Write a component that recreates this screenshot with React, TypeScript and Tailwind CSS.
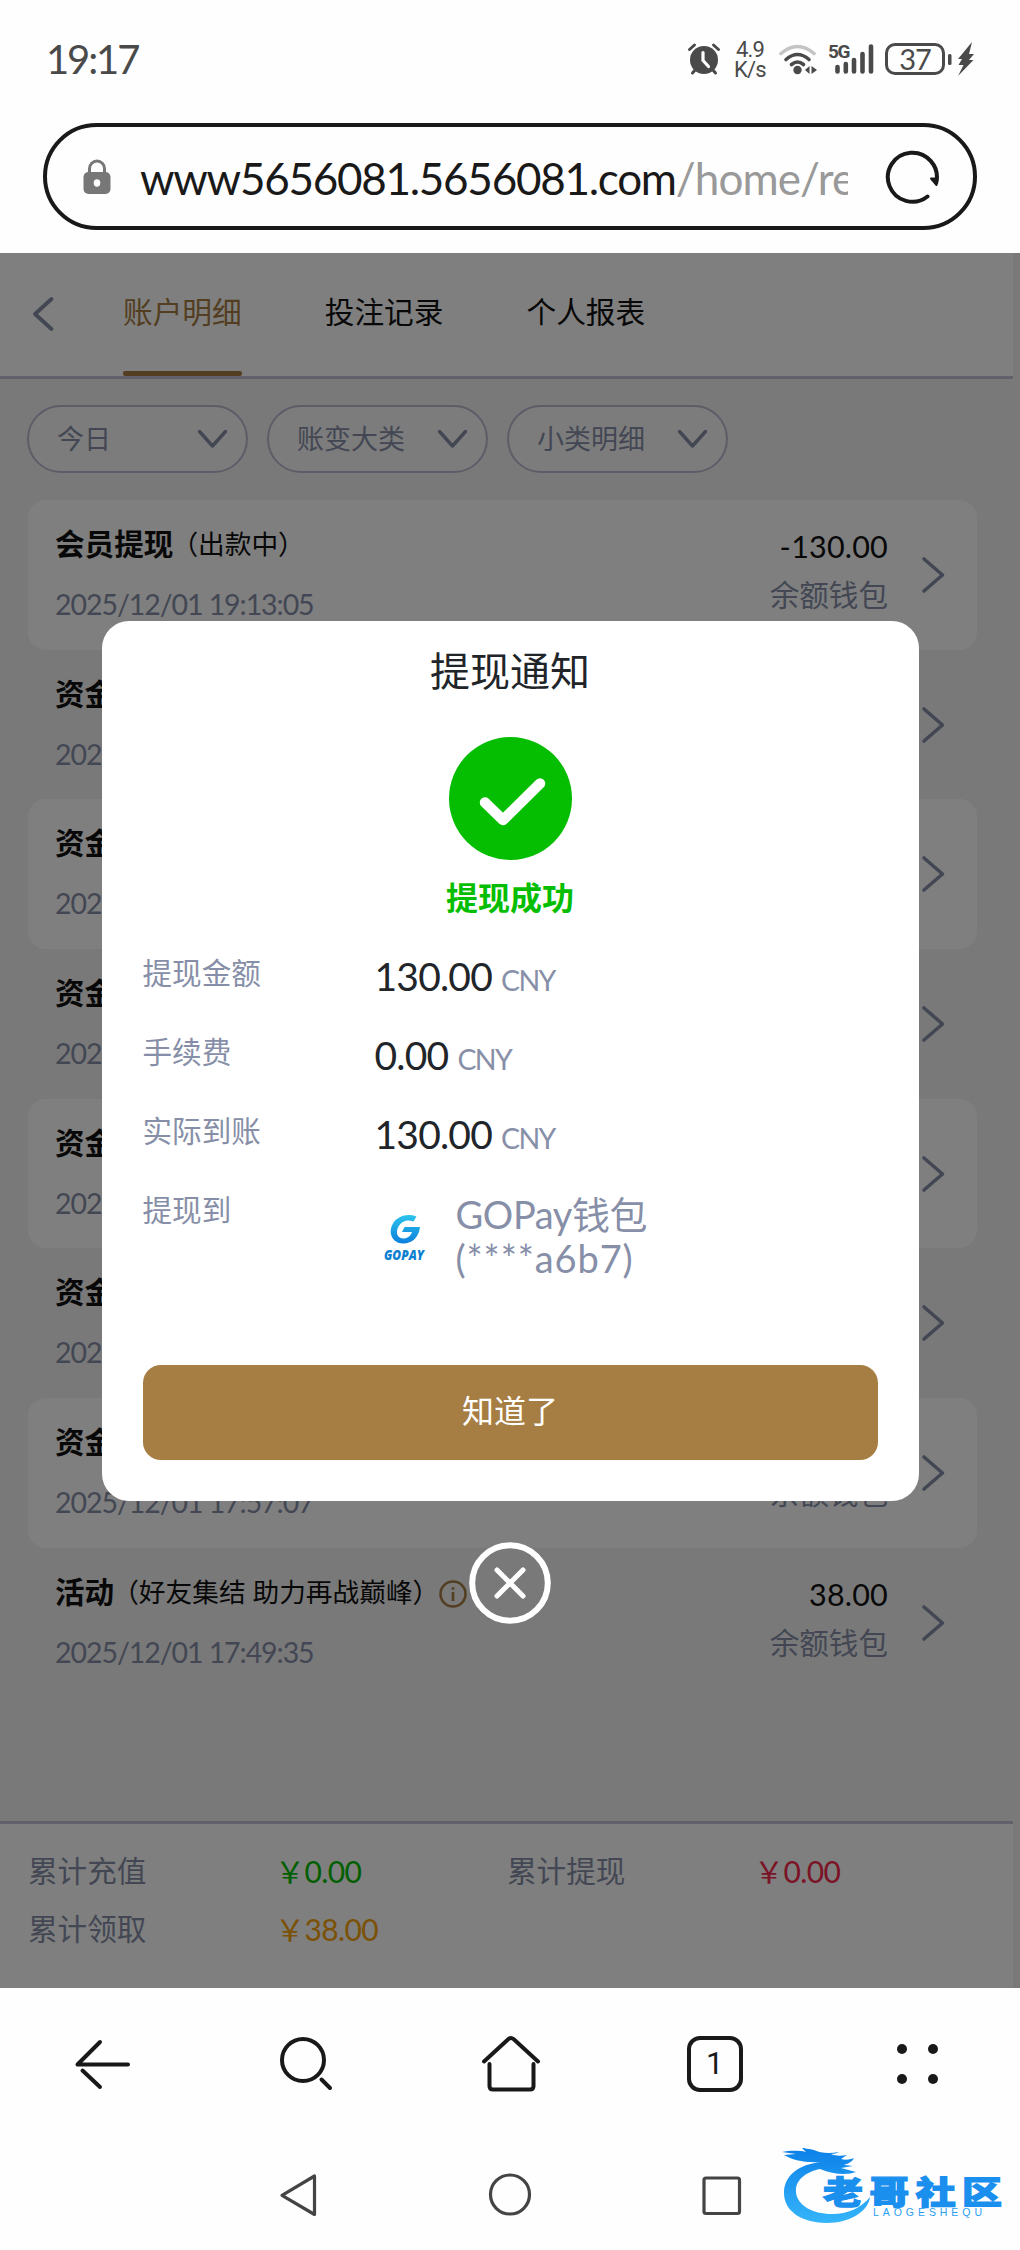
import type { ReactNode } from "react";

type RecordItem = {
  title: string;
  note?: string;
  info?: boolean;
  time: string;
  amount?: string;
};

const records: RecordItem[] = [
  { title: "会员提现", note: "（出款中）", time: "2025/12/01 19:13:05", amount: "-130.00" },
  { title: "资金", time: "2025/12/01" },
  { title: "资金", time: "2025/12/01" },
  { title: "资金", time: "2025/12/01" },
  { title: "资金", time: "2025/12/01" },
  { title: "资金", time: "2025/12/01" },
  { title: "资金", time: "2025/12/01 17:57:07" },
  { title: "活动", note: "（好友集结 助力再战巅峰）", info: true, time: "2025/12/01 17:49:35", amount: "38.00" },
];

const tabs = ["账户明细", "投注记录", "个人报表"];
const filters = ["今日", "账变大类", "小类明细"];

const StatusBar = () => (
  <div className="flex h-[123px] items-start pl-[46px] text-[#4a4a4a]">
    <span className="mt-[35px] w-[641px] text-[40px] leading-[48px] tracking-[-2.1px]">19:17</span>

    {/* alarm */}
    <svg className="mt-[42px] h-[34px] w-[34px]" viewBox="686 42 34 34" fill="none" stroke="currentColor" strokeLinecap="round">
      <circle cx="703" cy="60" r="14" fill="currentColor" stroke="none" />
      <path d="M688.500 49.500l5-4.500M717.500 49.500l-5-4.500M691.500 73l3-3.500M714.500 73l-3-3.500" strokeWidth="3" />
      <path d="M702 52.500v8l5.500 6" stroke="#fff" strokeWidth="3.200" />
    </svg>

    <div className="mt-[40px] ml-[12px] flex w-[34px] flex-col items-center font-[Roboto] text-[22px] leading-[20px] tracking-[-0.800px]">
      <span>4.9</span>
      <span>K/s</span>
    </div>

    {/* wifi */}
    <svg className="mt-[42px] ml-[11px] h-[34px] w-[40px]" viewBox="777 42 40 34" fill="none" stroke="currentColor" strokeLinecap="round" strokeWidth="3.600">
      <path d="M780 53.500q16.500-14 33 0" stroke="#c4c4c4" />
      <path d="M785 59.500q11.500-10 23 0M790.500 64.500q6-5 12 0" />
      <circle cx="796.500" cy="70" r="4.200" fill="currentColor" stroke="none" />
      <path d="M808.500 66v8l-4.500-4zM810.500 66v8l5.500-4z" fill="currentColor" stroke="none" />
    </svg>

    {/* signal */}
    <div className="relative ml-[10px] h-[76px] w-[46px]">
      <span className="absolute top-[41px] left-0 font-[Roboto] text-[19px] leading-[21px] font-bold tracking-[-1.500px]">5G</span>
      <svg className="absolute top-[42px] left-0 h-[34px] w-[46px]" viewBox="827 42 46 34" fill="none" stroke="currentColor" strokeLinecap="round" strokeWidth="4.600">
        <path d="M836.500 67v4.500M844.800 64v7.500M853 60v11.500M861.500 54v17.500M870 46.500v25" />
      </svg>
    </div>

    {/* battery */}
    <div className="mt-[43px] ml-[11px] flex h-[32px] w-[60px] items-center justify-center rounded-[10px] border-[3px] border-[#4a4a4a] text-[29px] leading-[30px] tracking-[-1px]">
      37
    </div>
    <svg className="mt-[41px] ml-[2px] h-[36px] w-[28px]" viewBox="946 41 28 36" fill="currentColor">
      <rect x="947" y="54" width="3.500" height="11" rx="1.500" />
      <path d="M971 42l-14 17h4l-3.500 6h5l-5.500 11 15.500-16h-4.500l5-6h-5z" />
    </svg>
  </div>
);

const AddressBar = () => (
  <div className="mx-[43px] mb-[23px] flex h-[107px] items-center rounded-full border-[4px] border-[#191919]">
    <svg className="ml-[36px] h-[36px] w-[28px]" viewBox="0 0 28 36">
      <path d="M6.500 15V9.500a7.500 7.500 0 0 1 15 0V15" fill="none" stroke="#777" strokeWidth="3" />
      <rect x="0.500" y="13" width="27" height="22" rx="5" fill="#777" />
      <ellipse cx="14" cy="24" rx="3.300" ry="3.700" fill="#fff" />
    </svg>
    <div className="mt-[3px] ml-[29px] w-[708px] overflow-hidden text-[44px] leading-[56px] tracking-[-1.260px] whitespace-nowrap text-[#191919]">
      www5656081.5656081.com<span className="tracking-[-0.900px] text-[#999]">/home/re</span>
    </div>
    <svg className="ml-[36px] h-[56px] w-[56px]" viewBox="0 0 56 56" fill="none" stroke="#191919" strokeWidth="4" strokeLinecap="round">
      <path d="M43.500 47.500A24.500 24.500 0 1 1 52.300 33.500" />
      <path d="M47 29.500l5.500 6.500 0.800-6.500z" fill="#191919" strokeWidth="2" strokeLinejoin="round" />
    </svg>
  </div>
);

const RecordRow = ({ item, filled }: { item: RecordItem; filled: boolean }) => (
  <div className={`flex h-[149.700px] rounded-[18px] pl-[27px] ${filled ? "bg-white" : ""}`}>
    <div className="flex-1 pt-[22px]">
      <div className="flex h-[44px] items-center text-[#111]">
        <span className="text-[29.600px] leading-[44px] font-bold">{item.title}</span>
        {item.note && <span className="-ml-[2px] text-[26.700px] leading-[44px] whitespace-nowrap">{item.note}</span>}
        {item.info && (
          <svg className="mt-[4px] h-[28px] w-[28px]" viewBox="0 0 28 28" fill="none" stroke="#a67d43" strokeWidth="2.600">
            <circle cx="14" cy="14" r="12.500" />
            <path d="M14 12v9M14 7.200v2.600" />
          </svg>
        )}
      </div>
      <div className="mt-[18px] text-[28.500px] leading-[40px] tracking-[-1.060px] text-[#878fa8]">{item.time}</div>
    </div>
    <div className="w-[162px] pt-[26px] text-right">
      <div className="h-[40px] text-[30.500px] leading-[40px] tracking-[0.200px] text-[#111]">{item.amount}</div>
      <div className="mt-[9px] text-[29.600px] leading-[40px] text-[#878fa8]">余额钱包</div>
    </div>
    <svg className="mt-[56px] mr-[31px] ml-[33px] h-[38px] w-[25px]" viewBox="0 0 25 38" fill="none" stroke="#878fa8" strokeWidth="3.600" strokeLinecap="round" strokeLinejoin="round">
      <path d="M3 3l18.500 16L3 35" />
    </svg>
  </div>
);

const Total = ({ label, children }: { label: string; children: ReactNode }) => (
  <div className="flex h-[58px] w-[479px] items-center">
    <span className="w-[247px] text-[29.600px] leading-[40px] tracking-normal text-[#878fa8]">{label}</span>
    {children}
  </div>
);

const AccountPage = () => (
  <div className="flex h-[1735px] flex-col bg-[#f3f3f3] pr-[7px]">
    <header className="flex h-[126px] items-stretch border-b-[3px] border-[#c0c2d8] bg-white pl-[31px]">
      <svg className="mt-[43px] h-[36px] w-[24px]" viewBox="0 0 24 36" fill="none" stroke="#878fa8" strokeWidth="3.800" strokeLinecap="round" strokeLinejoin="round">
        <path d="M20.500 3L4 18l16.500 15" />
      </svg>
      <nav className="ml-[68px] flex gap-[83px]">
        {tabs.map((tab, i) => (
          <div
            key={tab}
            className={`flex flex-col justify-between text-[29.700px] ${i === 0 ? "text-[#a67d43]" : "text-[#111]"}`}
          >
            <span className="mt-[37px] leading-[44px]">{tab}</span>
            {i === 0 && <span className="h-[5px] rounded-[2px] bg-[#a67d43]" />}
          </div>
        ))}
      </nav>
    </header>

    <div className="mt-[26px] ml-[27px] flex gap-[19px]">
      {filters.map((label) => (
        <div
          key={label}
          className="flex h-[68px] w-[221px] items-center justify-between rounded-full border-2 border-[#b8bacf] bg-[#f9f9f9] pr-[18px] pl-[28px] text-[27px] leading-[40px] text-[#878fa8]"
        >
          {label}
          <svg className="h-[20px] w-[31px]" viewBox="0 0 31 20" fill="none" stroke="#878fa8" strokeWidth="3.400" strokeLinecap="round" strokeLinejoin="round">
            <path d="M2.500 2.500l13 14.500L28.500 2.500" />
          </svg>
        </div>
      ))}
    </div>

    <div className="mt-[27px] mr-[36px] ml-[28px] flex-1">
      {records.map((item, i) => (
        <RecordRow key={i} item={item} filled={i % 2 === 0} />
      ))}
    </div>

    <footer className="flex h-[167px] flex-wrap content-start border-t-[3px] border-[#c0c2d8] bg-white pt-[18px] pl-[28px] text-[30px] tracking-[-0.600px]">
      <Total label="累计充值">
        <span className="text-[#04be02]">￥<span>0.00</span></span>
      </Total>
      <Total label="累计提现">
        <span className="text-[#f4284c]">￥<span>0.00</span></span>
      </Total>
      <Total label="累计领取">
        <span className="text-[#f5a30a]">￥<span>38.00</span></span>
      </Total>
    </footer>
  </div>
);

const DetailRow = ({ label, children }: { label: string; children: ReactNode }) => (
  <div className="flex h-[79px] items-start">
    <span className="w-[232px] text-[29.600px] leading-[44px] text-[#878fa8]">{label}</span>
    {children}
  </div>
);

const Money = ({ value }: { value: string }) => (
  <span className="mt-[3px] text-[39px] leading-[44px] tracking-[-0.800px] text-[#212529]">
    {value}
    <span className="ml-[9px] text-[28.500px] tracking-[-1.600px] text-[#878fa8]">CNY</span>
  </span>
);

const GoPayLogo = () => (
  <svg className="mt-[24px] ml-[8px] h-[50px] w-[42px]" viewBox="383 1214 42 50">
    <defs>
      <linearGradient id="gopay" x1="0" y1="0" x2="0" y2="1">
        <stop offset="0" stopColor="#2cc4ec" />
        <stop offset="1" stopColor="#0b7fdc" />
      </linearGradient>
    </defs>
    <path
      d="M416.500 1218.500c-9-3.500-19-0.500-23.500 7-5.500 9.500-0.500 19.800 10 20 9.500 0 16-6.500 17-16.500h-15.500l-2.500 5h10c-1.500 4.200-4.500 6.500-8.500 6.500-6 0-8-5.500-5.500-11 3-6.500 9.500-8.500 15.500-6z"
      fill="url(#gopay)"
    />
    <text x="384" y="1261.500" textLength="40" lengthAdjust="spacingAndGlyphs" fontFamily="Open Sans" fontSize="14" fontWeight="800" fontStyle="italic" fill="#0b80d0">
      GOPAY
    </text>
  </svg>
);

const WithdrawDialog = () => (
  <div className="absolute inset-0 flex flex-col items-center bg-black/50 pt-[368px]">
    <div className="flex h-[880px] w-[817px] flex-col rounded-[27px] bg-white px-[41px]">
      <h2 className="mt-[22px] text-center text-[40px] leading-[56px] text-[#212529]">提现通知</h2>
      <svg className="mt-[38px] h-[123px] w-[123px] self-center" viewBox="0 0 123 123">
        <circle cx="61.500" cy="61.500" r="61.500" fill="#05be02" />
        <path d="M36 65.500l18 17.500L91 46.500" fill="none" stroke="#fff" strokeWidth="10.500" strokeLinecap="round" strokeLinejoin="round" />
      </svg>
      <p className="mt-[16px] text-center text-[32px] leading-[44px] font-bold text-[#05be02]">提现成功</p>

      <div className="mt-[31px]">
        <DetailRow label="提现金额">
          <Money value="130.00" />
        </DetailRow>
        <DetailRow label="手续费">
          <Money value="0.00" />
        </DetailRow>
        <DetailRow label="实际到账">
          <Money value="130.00" />
        </DetailRow>
        <DetailRow label="提现到">
          <GoPayLogo />
          <span className="mt-[4px] ml-[31px] text-[38px] leading-[44px] tracking-[-0.400px] text-[#878fa8]">
            GOPay钱包
            <br />
            <span className="tracking-[0.900px]">(****a6b7)</span>
          </span>
        </DetailRow>
      </div>

      <button className="mt-[98px] h-[95px] rounded-[18px] bg-[#a67d43] pb-[3px] text-[32px] text-white">知道了</button>
    </div>

    <svg className="mt-[41px] h-[82px] w-[82px]" viewBox="0 0 82 82" fill="none" stroke="#fff" strokeLinecap="round">
      <circle cx="41" cy="41" r="37.800" strokeWidth="6" />
      <path d="M28 28l26 26M54 28L28 54" strokeWidth="5" />
    </svg>
  </div>
);

const BrowserNav = () => (
  <nav className="flex h-[152px] items-center justify-around text-[#191919]">
    <svg className="h-[60px] w-[60px]" viewBox="72 2034 60 60" fill="none" stroke="currentColor" strokeWidth="4" strokeLinecap="round" strokeLinejoin="round">
      <path d="M100 2042l-22.500 22.500H128M82.500 2070.500L100 2087" />
    </svg>
    <svg className="h-[60px] w-[60px]" viewBox="276.500 2034 60 60" fill="none" stroke="currentColor" strokeWidth="4" strokeLinecap="round">
      <circle cx="302.500" cy="2060" r="21" />
      <path d="M321 2079.500l8.500 8.500" />
    </svg>
    <svg className="h-[60px] w-[60px]" viewBox="481 2034 60 60" fill="none" stroke="currentColor" strokeWidth="4" strokeLinecap="round" strokeLinejoin="round">
      <path d="M483 2061.500l24.500-22.500q2.500-2 5 0l24.500 22.500" />
      <path d="M488.500 2064v22q0 3.500 3.500 3.500h37q3.500 0 3.500-3.500v-22" />
    </svg>
    <div className="flex h-[56px] w-[56px] items-center justify-center rounded-[13px] border-4 border-current font-[Roboto] text-[31px] leading-[40px]">
      1
    </div>
    <svg className="h-[60px] w-[60px]" viewBox="888 2034 60 60" fill="currentColor">
      <circle cx="902" cy="2049" r="5" />
      <circle cx="933" cy="2049" r="5" />
      <circle cx="902" cy="2079" r="5" />
      <circle cx="933" cy="2079" r="5" />
    </svg>
  </nav>
);

const Watermark = () => (
  <svg className="absolute top-[8px] left-[776px] h-[86px] w-[236px]" viewBox="776 2148 236 86">
    <defs>
      <linearGradient id="water" x1="0" y1="0" x2="0" y2="1">
        <stop offset="0" stopColor="#0b7fe8" />
        <stop offset="1" stopColor="#35b5fa" />
      </linearGradient>
    </defs>
    <path
      d="M822 2162c-24 2-38 14-38 31 0 19 19 30 43 30 22 0 41-11 43-26-9 11-22 17-38 17-20 0-35-9-36-22-1-12 10-20 24-23 14 6 28 6 36 3l-15-4 12-2-9-1c5-2 8-3 10-7-5 2-9 2-13 1l6-4c-6 1-12 1-16-1 3 0 6-1 8-2-10 2-19 1-25-2-4-1-8-1-13-3l5 5c-9-2-18-1-24 0l14 2-12 1c9 5 19 8 38 7z"
      fill="url(#water)"
    />
    <text x="823" y="2202" textLength="179" lengthAdjust="spacing" fontFamily="Noto Sans CJK SC" fontSize="40" fontWeight="900" fill="#1a8fee" stroke="#1a8fee" strokeWidth="1.500" transform="translate(0 442.400) scale(1 0.800)">
      老哥社区
    </text>
    <text x="873" y="2216" textLength="109" lengthAdjust="spacing" fontFamily="Liberation Sans" fontSize="10.500" fill="#2a9ff2">
      LAOGESHEQU
    </text>
  </svg>
);

const SystemNav = () => (
  <div className="relative h-[110px] text-[#444]">
    <div className="flex items-center gap-[166px] pt-[30px] pl-[276px]">
      <svg className="h-[50px] w-[44px]" viewBox="275 2170 44 50" fill="none" stroke="currentColor" strokeWidth="3.200" strokeLinejoin="round">
        <path d="M313.500 2176v38.500L281 2195.300z" />
      </svg>
      <svg className="h-[50px] w-[50px]" viewBox="486 2170 50 50" fill="none" stroke="currentColor" strokeWidth="3.200">
        <circle cx="510" cy="2194.500" r="19.500" />
      </svg>
      <svg className="h-[50px] w-[44px]" viewBox="702 2170 44 50" fill="none" stroke="currentColor" strokeWidth="3.200">
        <rect x="704" y="2178" width="35.500" height="35.500" rx="2" />
      </svg>
    </div>
    <Watermark />
  </div>
);

const App = () => {
  return (
    <main className="h-[2250px] w-[1020px] overflow-hidden bg-[#fefefe] font-['Lato','Noto_Sans_CJK_SC',sans-serif]">
      <StatusBar />
      <AddressBar />
      <section className="relative">
        <AccountPage />
        <WithdrawDialog />
      </section>
      <BrowserNav />
      <SystemNav />
    </main>
  );
};

export default App;
